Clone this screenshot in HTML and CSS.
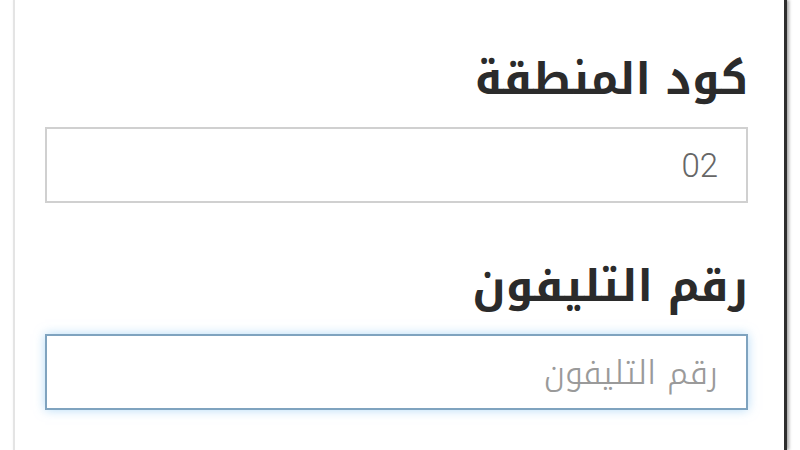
FILE: index.html
```html
<!DOCTYPE html>
<html lang="ar" dir="rtl">

<head>
  <meta charset="UTF-8" />
  <meta name="viewport" content="width=device-width, initial-scale=1" />
  <title>رقم التليفون</title>
  <link rel="stylesheet" href="styles.css">
</head>

<body>

  <!-- Phone form card -->
  <div class="card">
    <form class="phone-form">
      <label class="field-label" for="areaCode">كود المنطقة</label>
      <input class="field" id="areaCode" type="text" value="02" />

      <label class="field-label" for="phone">رقم التليفون</label>
      <input class="field focused" id="phone" type="text" placeholder="رقم التليفون" />
    </form>
  </div>

</body>

</html>
```

FILE: styles.css
```css
* {
  box-sizing: border-box;
}

body {
  margin: 0;
  background: #fff;
  height: 100vh;
  overflow: hidden;
  font-family: 'Noto Kufi Arabic', 'Noto Sans Arabic', 'DejaVu Sans', sans-serif;
}

/* Card */
.card {
  height: 100vh;
  margin-left: 13px;
  margin-right: 13px;
  background: #fff;
  border-left: 2px solid #e4e4e4;
  border-right: 3px solid #2e2e2e;
  box-shadow: 2px 0 3px rgba(0, 0, 0, 0.35);
}

.phone-form {
  display: flex;
  flex-direction: column;
  padding: 51px 36px 0 30px;
}

.field-label {
  font-size: 44px;
  font-weight: bold;
  color: #2b2b2b;
  line-height: 58px;
  margin-bottom: 18px;
}

.field {
  height: 76px;
  border: 2px solid #d0d0d0;
  background: #fff;
  padding: 0 28px;
  direction: rtl;
  text-align: right;
  font-family: 'Roboto', sans-serif;
  font-weight: 300;
  font-size: 33px;
  color: #666;
  outline: none;
  margin-bottom: 55px;
}

.field::placeholder {
  font-family: 'Noto Kufi Arabic', 'Noto Sans Arabic', 'DejaVu Sans', sans-serif;
  font-weight: 300;
  font-size: 33px;
  color: #9a9a9a;
}

.focused {
  border-color: #7fa3bf;
  box-shadow: 0 0 10px rgba(120, 190, 240, 0.55);
}
```
